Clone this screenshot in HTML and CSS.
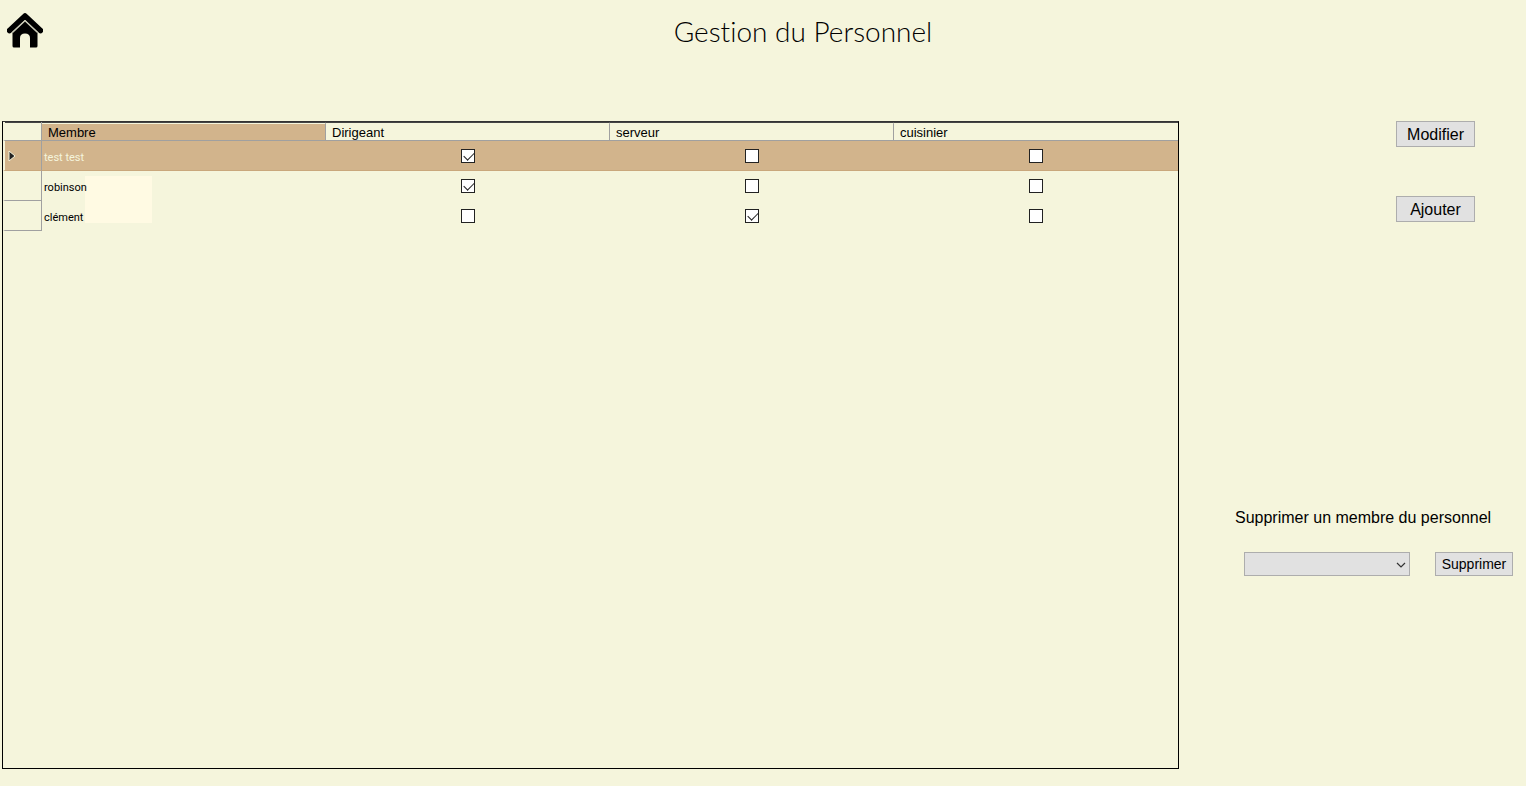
FILE: index.html
```html
<!DOCTYPE html>
<html lang="fr">
<head>
<meta charset="utf-8">
<title>Gestion du Personnel</title>
<link rel="stylesheet" href="styles.css">
</head>
<body>
<header class="header">
  <a class="home" href="#" aria-label="Accueil">
    <svg width="36" height="36" viewBox="0 0 36 36" aria-hidden="true">
      <path d="M2.500 18.500 18 4 33.500 18.500" fill="none" stroke="#000" stroke-width="5.500" stroke-linejoin="round" stroke-linecap="round"/>
      <path d="M5.500 20.500 18 8.800 30.500 20.500V34Q30.500 35.500 29 35.500H23V26Q23 21.500 18 21.500Q13 21.500 13 26V35.500H7Q5.500 35.500 5.500 34Z"/>
      <path d="M5.500 20.500 18 8.800 30.500 20.500" fill="none" stroke="#c9c9b6" stroke-width="1.200"/>
    </svg>
  </a>
  <h1 class="title">Gestion du Personnel</h1>
</header>
<main class="main">
  <section class="grid-frame">
    <table class="members">
      <thead>
        <tr><td class="row-head"></td><th class="current" scope="col">Membre</th><th scope="col">Dirigeant</th><th scope="col">serveur</th><th scope="col">cuisinier</th></tr>
      </thead>
      <tbody>
        <tr class="selected">
          <td class="row-head"><svg class="arrow" width="8" height="12" viewBox="0 0 8 12" aria-hidden="true"><path d="M1 1V11L7 6Z" fill="#222" stroke="#f5f5dc"/></svg></td>
          <td>test test</td>
          <td class="tick"><input type="checkbox" aria-label="test test, Dirigeant" checked></td>
          <td class="tick"><input type="checkbox" aria-label="test test, serveur"></td>
          <td class="tick"><input type="checkbox" aria-label="test test, cuisinier"></td>
        </tr>
        <tr>
          <td class="row-head"></td>
          <td>robinson</td>
          <td class="tick"><input type="checkbox" aria-label="robinson, Dirigeant" checked></td>
          <td class="tick"><input type="checkbox" aria-label="robinson, serveur"></td>
          <td class="tick"><input type="checkbox" aria-label="robinson, cuisinier"></td>
        </tr>
        <tr>
          <td class="row-head"></td>
          <td>clément</td>
          <td class="tick"><input type="checkbox" aria-label="clément, Dirigeant"></td>
          <td class="tick"><input type="checkbox" aria-label="clément, serveur" checked></td>
          <td class="tick"><input type="checkbox" aria-label="clément, cuisinier"></td>
        </tr>
      </tbody>
    </table>
    <div class="mask"></div>
  </section>
  <aside class="side">
    <div class="actions">
      <button class="btn" type="button">Modifier</button>
      <button class="btn" type="button">Ajouter</button>
    </div>
    <form class="remove">
      <label class="remove-label" for="member">Supprimer un membre du personnel</label>
      <div class="remove-row">
        <div class="combo">
          <select id="member"><option></option></select>
          <svg class="chevron" width="10" height="6" viewBox="0 0 10 6" aria-hidden="true"><path d="M1 1 5 5 9 1" fill="none" stroke="#333" stroke-width="1.200"/></svg>
        </div>
        <button class="btn btn-small" type="button">Supprimer</button>
      </div>
    </form>
  </aside>
</main>
</body>
</html>
```
FILE: styles.css
```css
* { box-sizing: border-box; }
body {
  margin: 0;
  min-height: 100vh;
  display: flex;
  flex-direction: column;
  background: #f5f5dc;
  color: #000;
  font-family: "Liberation Sans", Arial, sans-serif;
}
.header {
  display: grid;
  grid-template-columns: 80px 1fr;
  align-items: start;
  height: 121px;
  padding: 12px 0 0 7px;
}
.home { display: block; width: 36px; height: 36px; }
.home svg { display: block; }
.title {
  margin: 0;
  padding-right: 7px;
  text-align: center;
  font: 300 28px/38px Lato, sans-serif;
  font-variant-ligatures: none;
}
.main {
  flex: 1;
  display: grid;
  grid-template-columns: minmax(0, 1fr) 347px;
  padding: 0 0 17px 2px;
}
.grid-frame {
  position: relative;
  z-index: 0;
  border: 1px solid #000;
  border-top-color: #333;
  box-shadow: inset 0 1px #444;
}
.members {
  width: 100%;
  table-layout: fixed;
  border-collapse: separate;
  border-spacing: 0;
  font: 11px/13px Roboto, sans-serif;
}
.members th {
  height: 19px;
  padding: 1px 0 0 6px;
  border-top: 2px solid transparent;
  border-right: 1px solid #a0a0a0;
  border-bottom: 1px solid #a0a0a0;
  background-clip: padding-box;
  text-align: left;
  font: 400 13px/15px "Liberation Sans", Arial, sans-serif;
}
.members th:last-child { border-right: 0; }
.members th.current { background-color: #d2b48c; }
.members td { height: 30px; padding: 3px 0 0 2px; }
.members td.row-head {
  width: 39px;
  padding: 0 0 0 3px;
  border-left: 2px solid #f5f5dc;
  border-right: 1px solid #a0a0a0;
  border-bottom: 1px solid #a0a0a0;
}
.members thead td.row-head { height: 19px; }
.members .tick { padding: 0; text-align: center; }
.members .selected { background: #d2b48c; color: #f5f5dc; }
.members .selected td { border-bottom: 1px solid #c9a77c; }
.arrow { display: block; }
.tick input {
  appearance: none;
  display: block;
  width: 14px;
  height: 14px;
  margin: 0 auto;
  border: 1px solid #222;
  background: #fff;
}
.tick input:checked::before {
  content: "";
  display: block;
  width: 9px;
  height: 5px;
  margin: 2px 0 0 2px;
  border-left: 1px solid #222;
  border-bottom: 1px solid #222;
  transform: rotate(-45deg);
}
.mask {
  position: absolute;
  z-index: -1;
  left: 82px;
  top: 54px;
  width: 67px;
  height: 47px;
  background: #fffae3;
}
.side {
  display: flex;
  flex-direction: column;
  gap: 286px;
}
.actions {
  display: flex;
  flex-direction: column;
  align-items: flex-end;
  gap: 49px;
  padding-right: 51px;
}
.btn {
  width: 79px;
  height: 26px;
  padding: 1px 0 0;
  border: 1px solid #adadad;
  background: #e1e1e1;
  color: #000;
  font: 16px/23px "Liberation Sans", Arial, sans-serif;
}
.btn-small { width: 78px; height: 24px; font-size: 14px; line-height: 21px; }
.remove { padding: 0 13px 0 56px; }
.remove-label { display: block; font-size: 16px; line-height: 20px; white-space: nowrap; }
.remove-row {
  display: flex;
  align-items: center;
  justify-content: space-between;
  padding: 24px 0 0 9px;
}
.combo { position: relative; width: 166px; height: 24px; }
.combo select {
  appearance: none;
  display: block;
  width: 100%;
  height: 100%;
  border: 1px solid #adadad;
  border-radius: 0;
  background: #e1e1e1;
}
.chevron { position: absolute; right: 4px; top: 10px; pointer-events: none; }
```
